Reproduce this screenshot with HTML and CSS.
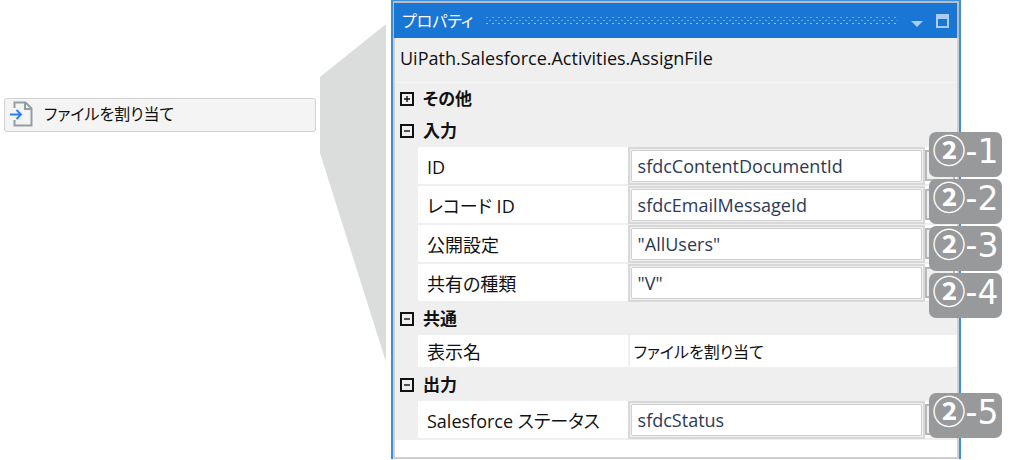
FILE: index.html
```html
<!DOCTYPE html>
<html lang="ja">
<head>
<meta charset="utf-8">
<meta name="viewport" content="width=device-width, initial-scale=1">
<title>プロパティ</title>
<link rel="stylesheet" href="styles.css">
</head>
<body>
<main class="stage">
  <div class="activity">
    <svg class="activity-icon" viewBox="0 0 24 28" aria-hidden="true">
      <path d="M4.500 8V2.500H15.500L21.500 8.500V25.500H4.500V20" fill="none" stroke="#929da4" stroke-width="2"/>
      <path d="M15 2.500V9H21.500" fill="none" stroke="#929da4" stroke-width="2"/>
      <path d="M0 14.500H10M6.500 10L11 14.500L6.500 19" fill="none" stroke="#2a82f0" stroke-width="2"/>
    </svg>
    <span>ファイルを割り当て</span>
  </div>

  <svg class="funnel" viewBox="0 0 67 338" preserveAspectRatio="none" aria-hidden="true">
    <path d="M0 53L66 0V338L0 129Z" fill="#dbdddc"/>
  </svg>

  <section class="panel" aria-label="プロパティ">
    <header class="titlebar">
      <h1 class="title">プロパティ</h1>
      <svg class="grip" aria-hidden="true">
        <defs>
          <pattern id="dots" width="6" height="9" patternUnits="userSpaceOnUse">
            <path d="M0 1h2v1h-2zM3 4h2v1h-2z" fill="#6aaae6"/>
            <path d="M0 7h2v1h-2z" fill="#8cc0f0"/>
          </pattern>
        </defs>
        <rect width="100%" height="9" fill="url(#dots)"/>
      </svg>
      <button class="tool" type="button" aria-label="メニュー">
        <svg width="12" height="14" viewBox="0 0 12 14"><path d="M0 7H12L6 13Z" fill="#a9cdf2"/></svg>
      </button>
      <button class="tool" type="button" aria-label="最大化">
        <svg width="13" height="14" viewBox="0 0 13 14"><path d="M0 0H13V14H0ZM2 5V12H11V5Z" fill="#a9cdf2" fill-rule="evenodd"/></svg>
      </button>
    </header>

    <div class="body">
      <p class="class-name">UiPath.Salesforce.Activities.AssignFile</p>

      <section class="group">
        <h2 class="group-head"><button class="toggle" type="button" aria-expanded="false">
          <svg class="box" viewBox="0 0 14 14" aria-hidden="true"><path d="M1 1H13V13H1Z"/><path class="sign" d="M4 7H10M7 4V10"/></svg>その他</button></h2>
      </section>

      <section class="group">
        <h2 class="group-head"><button class="toggle" type="button" aria-expanded="true">
          <svg class="box" viewBox="0 0 14 14" aria-hidden="true"><path d="M1 1H13V13H1Z"/><path class="sign" d="M4 7H10"/></svg>入力</button></h2>
        <div class="rows">
          <div class="row">
            <label class="name" for="id">ID</label>
            <div class="value"><input class="field" id="id" value="sfdcContentDocumentId"></div>
            <button class="more" type="button" aria-label="ID を編集"></button>
          </div>
          <div class="row">
            <label class="name" for="record">レコード ID</label>
            <div class="value"><input class="field" id="record" value="sfdcEmailMessageId"></div>
            <button class="more" type="button" aria-label="レコード ID を編集"></button>
          </div>
          <div class="row">
            <label class="name" for="visibility">公開設定</label>
            <div class="value"><input class="field" id="visibility" value="&quot;AllUsers&quot;"></div>
            <button class="more" type="button" aria-label="公開設定を編集"></button>
          </div>
          <div class="row">
            <label class="name" for="share">共有の種類</label>
            <div class="value"><input class="field" id="share" value="&quot;V&quot;"></div>
            <button class="more" type="button" aria-label="共有の種類を編集"></button>
          </div>
          <div class="callouts callouts-input">
            <span class="callout"><span class="circled">②</span>-1</span>
            <span class="callout"><span class="circled">②</span>-2</span>
            <span class="callout"><span class="circled">②</span>-3</span>
            <span class="callout"><span class="circled">②</span>-4</span>
          </div>
        </div>
      </section>

      <section class="group">
        <h2 class="group-head"><button class="toggle" type="button" aria-expanded="true">
          <svg class="box" viewBox="0 0 14 14" aria-hidden="true"><path d="M1 1H13V13H1Z"/><path class="sign" d="M4 7H10"/></svg>共通</button></h2>
        <div class="rows">
          <div class="row row-plain">
            <label class="name" for="display">表示名</label>
            <input class="plain" id="display" value="ファイルを割り当て">
          </div>
        </div>
      </section>

      <section class="group">
        <h2 class="group-head"><button class="toggle" type="button" aria-expanded="true">
          <svg class="box" viewBox="0 0 14 14" aria-hidden="true"><path d="M1 1H13V13H1Z"/><path class="sign" d="M4 7H10"/></svg>出力</button></h2>
        <div class="rows">
          <div class="row">
            <label class="name" for="status">Salesforce ステータス</label>
            <div class="value"><input class="field" id="status" value="sfdcStatus"></div>
            <button class="more" type="button" aria-label="Salesforce ステータスを編集"></button>
          </div>
          <div class="callouts callouts-output">
            <span class="callout"><span class="circled">②</span>-5</span>
          </div>
        </div>
      </section>
      <div class="tail"></div>
    </div>
  </section>
</main>
</body>
</html>
```
FILE: styles.css
```css
* {
  box-sizing: border-box;
}

body {
  margin: 0;
  background: #fff;
  color: #111;
  font-family: "Open Sans", "Noto Sans CJK JP", sans-serif;
  font-size: 18px;
  line-height: 24px;
  font-feature-settings: "palt";
}

h1,
h2,
p {
  margin: 0;
}

button,
input {
  margin: 0;
  padding: 0;
  border: 0;
  background: none;
  color: inherit;
  font: inherit;
  font-feature-settings: inherit;
}

.stage {
  display: grid;
  grid-template-columns: 312fr 67px 570fr;
  column-gap: 4px;
  align-items: start;
  padding: 0 59px 0 4px;
}

.activity {
  display: flex;
  align-items: center;
  gap: 10px;
  height: 34px;
  margin-top: 98px;
  padding: 0 5px 2px;
  border: 1px solid #d2d2d2;
  border-radius: 3px;
  background: #f4f4f4;
  font-size: 16px;
}

.activity-icon {
  width: 24px;
  height: 28px;
}

.funnel {
  width: 100%;
  height: 338px;
  margin-top: 24px;
}

.panel {
  min-width: 0;
  border: 2px solid #3f8edb;
  border-top: 1px solid #3f8edb;
  border-bottom: 0;
  background: #b9bcc0;
}

.titlebar {
  display: flex;
  align-items: center;
  gap: 13px;
  height: 35px;
  margin: 2px 2px 0 1px;
  padding: 0 8px;
  background: #1976d4;
  color: #fff;
}

.title {
  font-size: 16px;
  font-weight: 400;
}

.grip {
  flex: 1;
  min-width: 0;
  height: 9px;
}

.tool {
  display: flex;
}

.body {
  border: 2px solid #cfcfcf;
  border-width: 0 2px 2px;
  background: #efefef;
}

.class-name {
  height: 45px;
  padding: 8px 4px 0 5px;
  border-bottom: 1px solid #f6f6f6;
  overflow: hidden;
}

.group-head {
  font-size: 17px;
  font-weight: 700;
}

.toggle {
  display: flex;
  align-items: center;
  gap: 9px;
  width: 100%;
  height: 32px;
  padding: 0 0 1px 5px;
  text-align: left;
}

.box {
  width: 14px;
  height: 14px;
  fill: none;
  stroke: #111;
  stroke-width: 2;
}

.sign {
  stroke-width: 1.4;
}

.rows {
  position: relative;
  margin-left: 23px;
}

.row {
  display: grid;
  grid-template-columns: 210fr 298fr 32px;
  height: 39px;
  border-bottom: 2px solid #efefef;
  background: #fff;
}

.row-plain {
  grid-template-columns: 210fr 330fr;
  height: 34px;
}

.name {
  padding-left: 9px;
  line-height: 40px;
  white-space: nowrap;
}

.row-plain .name {
  line-height: 34px;
}

.value {
  display: flex;
  height: 38px;
  padding: 1px;
  border: 2px solid #d8d8d8;
  background: #efefef;
}

.field {
  width: 100%;
  min-width: 0;
  padding: 0 6px;
  border: 1px solid #d0d0d0;
  border-radius: 2px;
  background: #fff;
  color: #2d3a55;
}

.plain {
  width: 100%;
  min-width: 0;
  padding: 0 4px;
  border-left: 2px solid #efefef;
  font-size: 16px;
}

.more {
  height: 31px;
  margin: 3px 2px 0 0;
  border: 2px solid #b8b8b8;
  background: #efefef;
}

.callouts {
  position: absolute;
  right: -45px;
  display: flex;
  flex-direction: column;
  gap: 2px;
}

.callouts-input {
  top: -15px;
}

.callouts-output {
  top: -8px;
}

.callout {
  display: flex;
  align-items: baseline;
  justify-content: center;
  height: 45px;
  width: 73px;
  border-radius: 7px;
  background: #98999b;
  color: #fff;
  font-family: "DejaVu Sans", sans-serif;
  font-size: 33px;
  line-height: 34px;
  white-space: nowrap;
}

.circled {
  font-family: "Noto Sans CJK JP", sans-serif;
  font-weight: 700;
}

.tail {
  height: 17px;
  background: #fff;
}
```
